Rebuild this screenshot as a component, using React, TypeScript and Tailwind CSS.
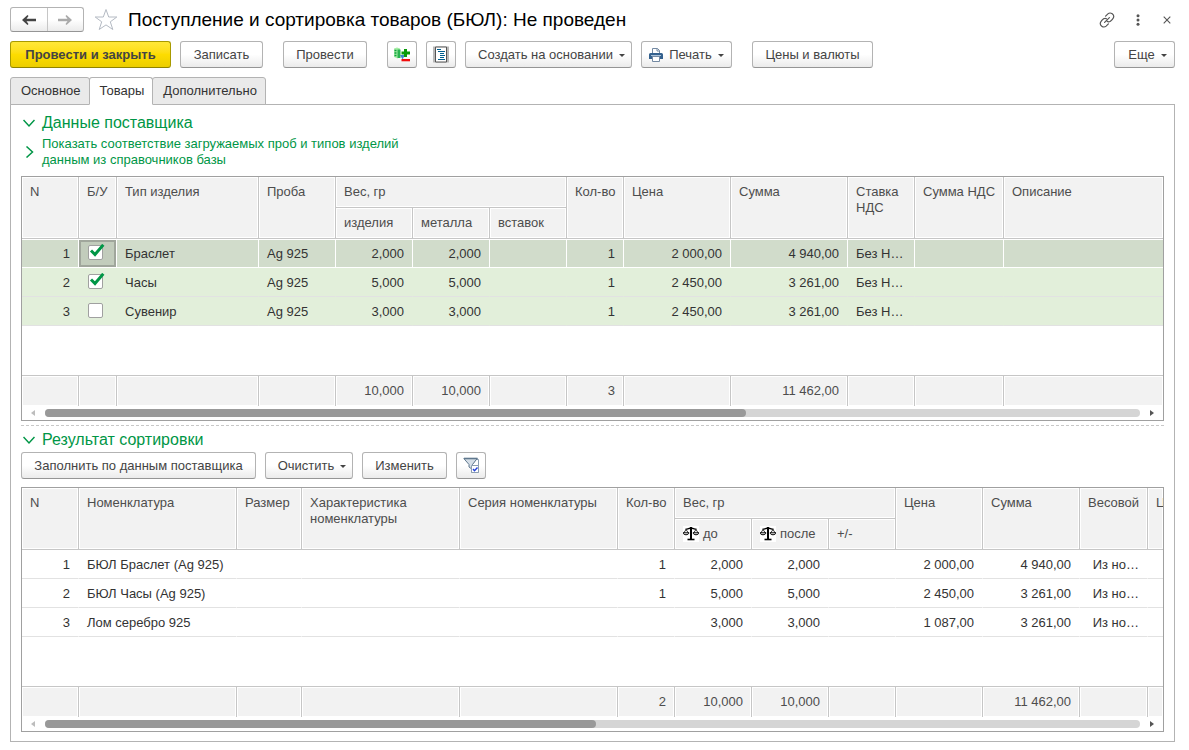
import type { ReactNode } from 'react';
import clsx from 'clsx';

type Align = 'left' | 'right';

interface Column {
  title: string;
  width: string;
  group?: string;
  align?: Align;
  icon?: boolean;
}

interface Row {
  cells: string[];
  used?: boolean;
}

const supplierColumns: Column[] = [
  { title: 'N', width: 'w-[57px]', align: 'right' },
  { title: 'Б/У', width: 'w-[38px]' },
  { title: 'Тип изделия', width: 'w-[142px]' },
  { title: 'Проба', width: 'w-[77px]' },
  { title: 'изделия', width: 'w-[77px]', group: 'Вес, гр', align: 'right' },
  { title: 'металла', width: 'w-[77px]', group: 'Вес, гр', align: 'right' },
  { title: 'вставок', width: 'w-[77px]', group: 'Вес, гр', align: 'right' },
  { title: 'Кол-во', width: 'w-[57px]', align: 'right' },
  { title: 'Цена', width: 'w-[107px]', align: 'right' },
  { title: 'Сумма', width: 'w-[117px]', align: 'right' },
  { title: 'Ставка НДС', width: 'w-[67px]' },
  { title: 'Сумма НДС', width: 'w-[89px]', align: 'right' },
  { title: 'Описание', width: 'w-auto' },
];

const supplierRows: Row[] = [
  { used: true, cells: ['1', '', 'Браслет', 'Ag 925', '2,000', '2,000', '', '1', '2 000,00', '4 940,00', 'Без Н…', '', ''] },
  { used: true, cells: ['2', '', 'Часы', 'Ag 925', '5,000', '5,000', '', '1', '2 450,00', '3 261,00', 'Без Н…', '', ''] },
  { used: false, cells: ['3', '', 'Сувенир', 'Ag 925', '3,000', '3,000', '', '1', '2 450,00', '3 261,00', 'Без Н…', '', ''] },
];

const supplierTotals = ['', '', '', '', '10,000', '10,000', '', '3', '', '11 462,00', '', '', ''];

const resultColumns: Column[] = [
  { title: 'N', width: 'w-[57px]', align: 'right' },
  { title: 'Номенклатура', width: 'w-[158px]' },
  { title: 'Размер', width: 'w-[65px]' },
  { title: 'Характеристика номенклатуры', width: 'w-[158px]' },
  { title: 'Серия номенклатуры', width: 'w-[158px]' },
  { title: 'Кол-во', width: 'w-[57px]', align: 'right' },
  { title: 'до', width: 'w-[77px]', group: 'Вес, гр', align: 'right', icon: true },
  { title: 'после', width: 'w-[77px]', group: 'Вес, гр', align: 'right', icon: true },
  { title: '+/-', width: 'w-[67px]', group: 'Вес, гр', align: 'right' },
  { title: 'Цена', width: 'w-[87px]', align: 'right' },
  { title: 'Сумма', width: 'w-[97px]', align: 'right' },
  { title: 'Весовой', width: 'w-[68px]', align: 'right' },
  { title: 'Ц', width: 'w-auto' },
];

const resultRows: Row[] = [
  { cells: ['1', 'БЮЛ Браслет (Ag 925)', '', '', '', '1', '2,000', '2,000', '', '2 000,00', '4 940,00', 'Из но…', ''] },
  { cells: ['2', 'БЮЛ Часы (Ag 925)', '', '', '', '1', '5,000', '5,000', '', '2 450,00', '3 261,00', 'Из но…', ''] },
  { cells: ['3', 'Лом серебро 925', '', '', '', '', '3,000', '3,000', '', '1 087,00', '3 261,00', 'Из но…', ''] },
];

const resultTotals = ['', '', '', '', '', '2', '10,000', '10,000', '', '', '11 462,00', '', ''];

const ArrowIcon = ({ flip }: { flip?: boolean }) => (
  <svg width="14" height="10" viewBox="0 0 14 10" className={clsx(flip && 'rotate-180')}>
    <path d="M0 5 L5.5 0 L6.5 1 L4.5 3.8 H14 V6.2 H4.5 L6.5 9 L5.5 10 Z" fill="currentColor" />
  </svg>
);

const StarIcon = () => (
  <svg width="24" height="24" viewBox="0 0 24 24" fill="none" stroke="#b4bac3" strokeWidth="1">
    <path d="M12 1.5 L14.7 9 H22.8 L16.3 13.8 L18.8 21.5 L12 16.9 L5.2 21.5 L7.7 13.8 L1.2 9 H9.3 Z" />
  </svg>
);

const LinkIcon = () => (
  <svg width="16" height="16" viewBox="0 0 16 16" fill="none" stroke="#555" strokeWidth="1.2" strokeLinecap="round">
    <path d="M6.6 4.2 L8.9 1.9 C11.6 -0.4 16 2.6 14.3 6 C13.8 7 12.6 8.3 11.4 9.2 C10.2 10 8.8 9.8 8.1 9.2" />
    <path d="M9.4 11.8 L7.1 14.1 C4.4 16.4 0 13.4 1.7 10 C2.2 9 3.4 7.7 4.6 6.8 C5.6 6.2 6.6 6.2 7.4 6.8" />
    <path d="M5.6 10.4 L10.4 5.6" />
  </svg>
);

const DotsIcon = () => (
  <svg width="4" height="12" viewBox="0 0 4 12" fill="#555">
    <circle cx="2" cy="1.8" r="1.5" />
    <circle cx="2" cy="6" r="1.5" />
    <circle cx="2" cy="10.2" r="1.5" />
  </svg>
);

const CloseIcon = () => (
  <svg width="8" height="8" viewBox="0 0 8 8" stroke="#555" strokeWidth="1.1">
    <path d="M0.7 0.7 L7.3 7.3 M7.3 0.7 L0.7 7.3" />
  </svg>
);

const MovementsIcon = () => (
  <svg width="16" height="16" viewBox="0 0 16 16">
    <path d="M0 1.5 L3 0.5 L6 1.5 V10 L3.5 11.5 L0 10 Z" fill="#a5eda5" />
    <path d="M0.5 3.5 h2 M0.5 6 h2 M0.5 8.5 h2" stroke="#0aa03c" strokeWidth="1.3" />
    <path d="M3.5 2.5 h3 v8.5 h-3 Z" fill="#27b34f" />
    <path d="M6 8 h5 L8.5 12.5 Z" fill="#3c87cf" />
    <path d="M10 2 h3 v2.5 h3 v3 h-3 v2.5 h-3 V7.5 H7.5 V4.5 H10 Z" fill="#0a9b0a" />
    <path d="M7.5 12 h8.5 v2.3 H7.5 Z" fill="#f20d0d" />
  </svg>
);

const JournalIcon = () => (
  <svg width="16" height="17" viewBox="0 0 16 17">
    <path d="M0 0.5 h16 v16 H0 Z" fill="#b9b9b9" />
    <path d="M2.5 1 h11 v15 h-11 Z" fill="#fff" stroke="#555" />
    <path d="M4 3.5 h4 M5 5.5 h7 M7 7.5 h4 M7 9.5 h5 M7 11.5 h4 M5 13.5 h7" stroke="#005f8f" strokeWidth="1.2" />
  </svg>
);

const PrinterIcon = () => (
  <svg width="14" height="14" viewBox="0 0 14 14">
    <path d="M3.5 5 V0.5 h5 l2 2 V5" fill="#fff" stroke="#7389a2" />
    <path d="M8 0.5 V3 h2.5" fill="none" stroke="#7389a2" />
    <path d="M1.5 5 h11 a1.5 1.5 0 0 1 1.5 1.5 V11 H0 V6.5 A1.5 1.5 0 0 1 1.5 5 Z" fill="#34618e" />
    <path d="M2 7.5 h10" stroke="#a9c1d9" />
    <path d="M3.5 8.5 h7 v5 h-7 Z" fill="#fff" stroke="#7389a2" />
  </svg>
);

const FilterIcon = () => (
  <svg width="17" height="17" viewBox="0 0 17 17">
    <path d="M8.5 8.5 L13 2.5 H15.5 V15.5 H8.5 Z" fill="#fff" stroke="#8b9db0" />
    <path d="M0.8 1.5 H14.2 L9.5 7.5 V12.5 L6 10 V7.5 Z" fill="#d5dee7" stroke="#60788e" />
    <path d="M1 1.5 H14.5" stroke="#60788e" strokeWidth="1.6" />
    <path d="M8.5 8.5 h7 v7 h-7 Z" fill="#fff" stroke="#8b9db0" />
    <path d="M10 12 L11.5 13.8 L14.5 10.5" fill="none" stroke="#2340d8" strokeWidth="1.4" />
  </svg>
);

const ScalesIcon = () => (
  <svg width="16" height="16" viewBox="0 0 16 16" className="shrink-0 bg-white" fill="none" stroke="#000">
    <path d="M8 1 V13.5" strokeWidth="2" />
    <path d="M4.5 13.5 H11.5" strokeWidth="1.6" />
    <path d="M2.5 3.2 C5 3.2 6 2 8 2 C10 2 11 3.2 13.5 3.2" strokeWidth="1.3" />
    <path d="M3 3.5 L0.8 7 M3 3.5 L5.4 7 M13 3.5 L10.6 7 M13 3.5 L15.2 7" strokeWidth="0.8" />
    <path d="M0 6.8 H6 C5.5 9.4 0.5 9.4 0 6.8 Z M10 6.8 H16 C15.5 9.4 10.5 9.4 10 6.8 Z" strokeWidth="1" />
  </svg>
);

const Caret = () => (
  <svg width="6" height="3" viewBox="0 0 6 3" className="mt-0.5 shrink-0">
    <path d="M0 0 H6 L3 3 Z" fill="#444" />
  </svg>
);

const Chevron = ({ open }: { open?: boolean }) => (
  <svg width="12" height="12" viewBox="0 0 12 12" fill="none" stroke="#009646" strokeWidth="1.5" className="shrink-0">
    <path d={open ? 'M0.5 3 L6 9 L11.5 3' : 'M3.5 0.5 L9.5 6 L3.5 11.5'} />
  </svg>
);

interface ToolButtonProps {
  children: ReactNode;
  className?: string;
  primary?: boolean;
  label?: string;
}

function ToolButton({ children, className, primary, label }: ToolButtonProps) {
  return (
    <button
      type="button"
      aria-label={label}
      className={clsx(
        'flex h-[27px] shrink-0 items-center justify-center rounded-[3px] border whitespace-nowrap',
        primary
          ? 'border-[#a89a00] border-b-[#8f8300] bg-linear-to-b from-[#ffe838] via-[#fddc00] to-[#ecce00] font-bold text-[#444]'
          : 'border-[#b3b3b3] border-b-[#959595] bg-linear-to-b from-white from-50% to-[#ebebeb] text-[#444]',
        className,
      )}
    >
      {children}
    </button>
  );
}

function SectionTitle({ children }: { children: ReactNode }) {
  return (
    <button type="button" className="flex h-5 items-center gap-[7px] pl-0.5 text-base leading-5 text-[#009646]">
      <Chevron open />
      {children}
    </button>
  );
}

function UsedCheckbox({ checked, row }: { checked: boolean; row: string }) {
  return (
    <label className="relative mb-0.5 ml-[9px] block size-[15px]">
      <input
        type="checkbox"
        defaultChecked={checked}
        aria-label={`Б/У, строка ${row}`}
        className="peer block size-[15px] appearance-none rounded-[2px] border border-[#a0a0a0] bg-white"
      />
      <svg
        viewBox="0 0 16 16"
        className="pointer-events-none absolute -top-px left-px hidden size-4 peer-checked:block"
        fill="none"
        stroke="#009646"
        strokeWidth="3"
      >
        <path d="M2 6.5 L6 10.5 L14.3 0.8" />
      </svg>
    </label>
  );
}

const headCell = 'border-b border-r border-b-[#c6c6c6] border-r-[#c6c6c6] bg-[#f2f2f2] pl-2 pr-1 pt-[7px] text-left align-top font-normal overflow-hidden shadow-[inset_0_0_0_1px_#fff]';

interface DataTableProps {
  caption: string;
  columns: Column[];
  rows: Row[];
  totals: string[];
  thumb: number;
  tinted?: boolean;
}

function DataTable({ caption, columns, rows, totals, thumb, tinted }: DataTableProps) {
  const grouped = columns.filter((c) => c.group);

  const cellColors = (selected: boolean, isCheck: boolean) => {
    if (selected && isCheck) return 'border-t border-r border-white bg-[#c2ccbc] shadow-[inset_0_0_0_2px_#a0a69c]';
    if (selected) return 'border-t border-r border-white bg-[#d1dccb]';
    return clsx('border-r border-r-transparent border-b-[#e2e2e2]', tinted && 'bg-[#e2efda]');
  };

  return (
    <div className="overflow-hidden border border-[#a0a0a0] bg-white">
      <table aria-label={caption} className="w-full table-fixed border-separate border-spacing-0 text-[#333]">
        <colgroup>
          {columns.map((c, i) => (
            <col key={i} className={c.width} />
          ))}
        </colgroup>
        <thead className="text-[#4d4d4d]">
          <tr className="h-[31px]">
            {columns.map((c, i) => {
              if (c.group) {
                return c === grouped[0] ? (
                  <th key={i} colSpan={grouped.length} className={headCell}>{c.group}</th>
                ) : null;
              }
              return <th key={i} rowSpan={2} className={clsx(headCell, 'last:border-r-0')}>{c.title}</th>;
            })}
          </tr>
          <tr className="h-[31px]">
            {grouped.map((c) => (
              <th key={c.title} className={headCell}>
                <span className="flex items-center gap-1">
                  {c.icon && <ScalesIcon />}
                  {c.title}
                </span>
              </th>
            ))}
          </tr>
        </thead>
        <tbody>
          {rows.map((row, r) => {
            const selected = !!tinted && r === 0;
            return (
              <tr key={r} className="h-[29px]">
                {row.cells.map((cell, i) => {
                  const isCheck = i === 1 && row.used !== undefined;
                  return (
                    <td
                      key={i}
                      className={clsx(
                        'border-b whitespace-nowrap last:border-r-0',
                        cellColors(selected, isCheck),
                        isCheck ? 'p-0' : 'px-2',
                        !isCheck && !selected && 'pt-0.5',
                        columns[i].align === 'right' && 'text-right',
                      )}
                    >
                      {isCheck ? <UsedCheckbox checked={!!row.used} row={row.cells[0]} /> : cell}
                    </td>
                  );
                })}
              </tr>
            );
          })}
          <tr className="h-[49px]" aria-hidden="true">
            <td colSpan={columns.length} />
          </tr>
        </tbody>
        <tfoot className="text-[#4d4d4d]">
          <tr className="h-[31px]">
            {totals.map((total, i) => (
              <td
                key={i}
                className="border-t border-r border-t-[#c6c6c6] border-r-[#c6c6c6] bg-[#f2f2f2] px-2 text-right shadow-[inset_0_0_0_1px_#fff] last:border-r-0"
              >
                {total}
              </td>
            ))}
          </tr>
        </tfoot>
      </table>
      <div className="flex h-3.5 items-center px-2">
        <svg width="15" height="6" viewBox="0 0 15 6" className="shrink-0">
          <path d="M5 0 V6 L1 3 Z" fill="#bdbdbd" />
        </svg>
        <div className="h-2 flex-1 rounded-full bg-[#d5d5d5]">
          <div className="h-2 rounded-full bg-[#999]" style={{ width: `${thumb}%` }} />
        </div>
        <svg width="15" height="6" viewBox="0 0 15 6" className="shrink-0">
          <path d="M10 0 V6 L14 3 Z" fill="#555" />
        </svg>
      </div>
    </div>
  );
}

const tabs = ['Основное', 'Товары', 'Дополнительно'];

export default function App() {
  return (
    <div className="min-w-[1100px] bg-white pt-[7px] pr-3.5 pb-2 pl-2.5 font-['Liberation_Sans',Arial,sans-serif] text-[13px] leading-4 text-[#333]">
      <header className="flex h-[25px] items-center">
        <div className="flex h-[25px] w-[74px] rounded-[3px] border border-[#b3b3b3] border-b-[#959595] bg-linear-to-b from-white from-50% to-[#ebebeb]">
          <button type="button" aria-label="Назад" className="flex flex-1 items-center justify-center border-r border-[#c6c6c6] text-[#444]">
            <ArrowIcon />
          </button>
          <button type="button" aria-label="Вперед" className="flex flex-1 items-center justify-center text-[#aaa]">
            <ArrowIcon flip />
          </button>
        </div>
        <button type="button" aria-label="В избранное" className="ml-2.5">
          <StarIcon />
        </button>
        <h1 className="ml-2.5 flex-1 text-[19px] leading-6 whitespace-nowrap text-black">
          Поступление и сортировка товаров (БЮЛ): Не проведен
        </h1>
        <div className="flex items-center gap-[21px] pr-0.5">
          <button type="button" aria-label="Получить ссылку"><LinkIcon /></button>
          <button type="button" aria-label="Дополнительные действия"><DotsIcon /></button>
          <button type="button" aria-label="Закрыть" className="flex w-3 justify-center"><CloseIcon /></button>
        </div>
      </header>

      <div className="mt-[9px] flex items-center">
        <ToolButton primary className="w-[161px]">Провести и закрыть</ToolButton>
        <ToolButton className="ml-[9px] w-[83px]">Записать</ToolButton>
        <ToolButton className="ml-5 w-[84px]">Провести</ToolButton>
        <ToolButton className="ml-5 w-[30px]" label="Движения документа"><MovementsIcon /></ToolButton>
        <ToolButton className="ml-[9px] w-[30px]" label="Журнал"><JournalIcon /></ToolButton>
        <ToolButton className="ml-[9px] w-[167px] gap-1.5 pl-1.5">Создать на основании <Caret /></ToolButton>
        <ToolButton className="ml-[9px] w-[91px] gap-1.5">
          <PrinterIcon />
          Печать
          <Caret />
        </ToolButton>
        <ToolButton className="ml-5 w-[121px]">Цены и валюты</ToolButton>
        <ToolButton className="ml-auto w-[61px] gap-1.5 pl-1.5">Еще <Caret /></ToolButton>
      </div>

      <nav role="tablist" className="mt-[9px] flex">
        {tabs.map((tab) => {
          const active = tab === 'Товары';
          return (
            <button
              key={tab}
              type="button"
              role="tab"
              aria-selected={active}
              className={clsx(
                'relative -mb-px h-7 rounded-t-[3px] border border-[#b3b3b3] pr-2 pl-2.5 text-[#333] not-first:-ml-px',
                active ? 'z-10 border-b-white bg-white' : 'bg-[#eaeaea]',
              )}
            >
              {tab}
            </button>
          );
        })}
      </nav>

      <main className="border border-[#b3b3b3] px-2.5 pt-2 pb-[9px]">
        <section>
          <SectionTitle>Данные поставщика</SectionTitle>
          <button type="button" className="mt-[3px] mb-2 flex items-center gap-[7px] pl-0.5 text-left text-[#009646]">
            <Chevron />
            <span>
              Показать соответствие загружаемых проб и типов изделий
              <br />
              данным из справочников базы
            </span>
          </button>
          <DataTable
            caption="Данные поставщика"
            columns={supplierColumns}
            rows={supplierRows}
            totals={supplierTotals}
            thumb={64}
            tinted
          />
        </section>

        <section className="mt-1 border-t border-dashed border-[#c8c8c8] pt-1">
          <SectionTitle>Результат сортировки</SectionTitle>
          <div className="mt-0.5 mb-2 flex gap-[9px]">
            <ToolButton className="w-[235px]">Заполнить по данным поставщика</ToolButton>
            <ToolButton className="w-[88px] gap-1.5 pl-1.5">Очистить <Caret /></ToolButton>
            <ToolButton className="w-[85px]">Изменить</ToolButton>
            <ToolButton className="w-[30px]" label="Отбор"><FilterIcon /></ToolButton>
          </div>
          <DataTable
            caption="Результат сортировки"
            columns={resultColumns}
            rows={resultRows}
            totals={resultTotals}
            thumb={50.3}
          />
        </section>
      </main>
    </div>
  );
}
